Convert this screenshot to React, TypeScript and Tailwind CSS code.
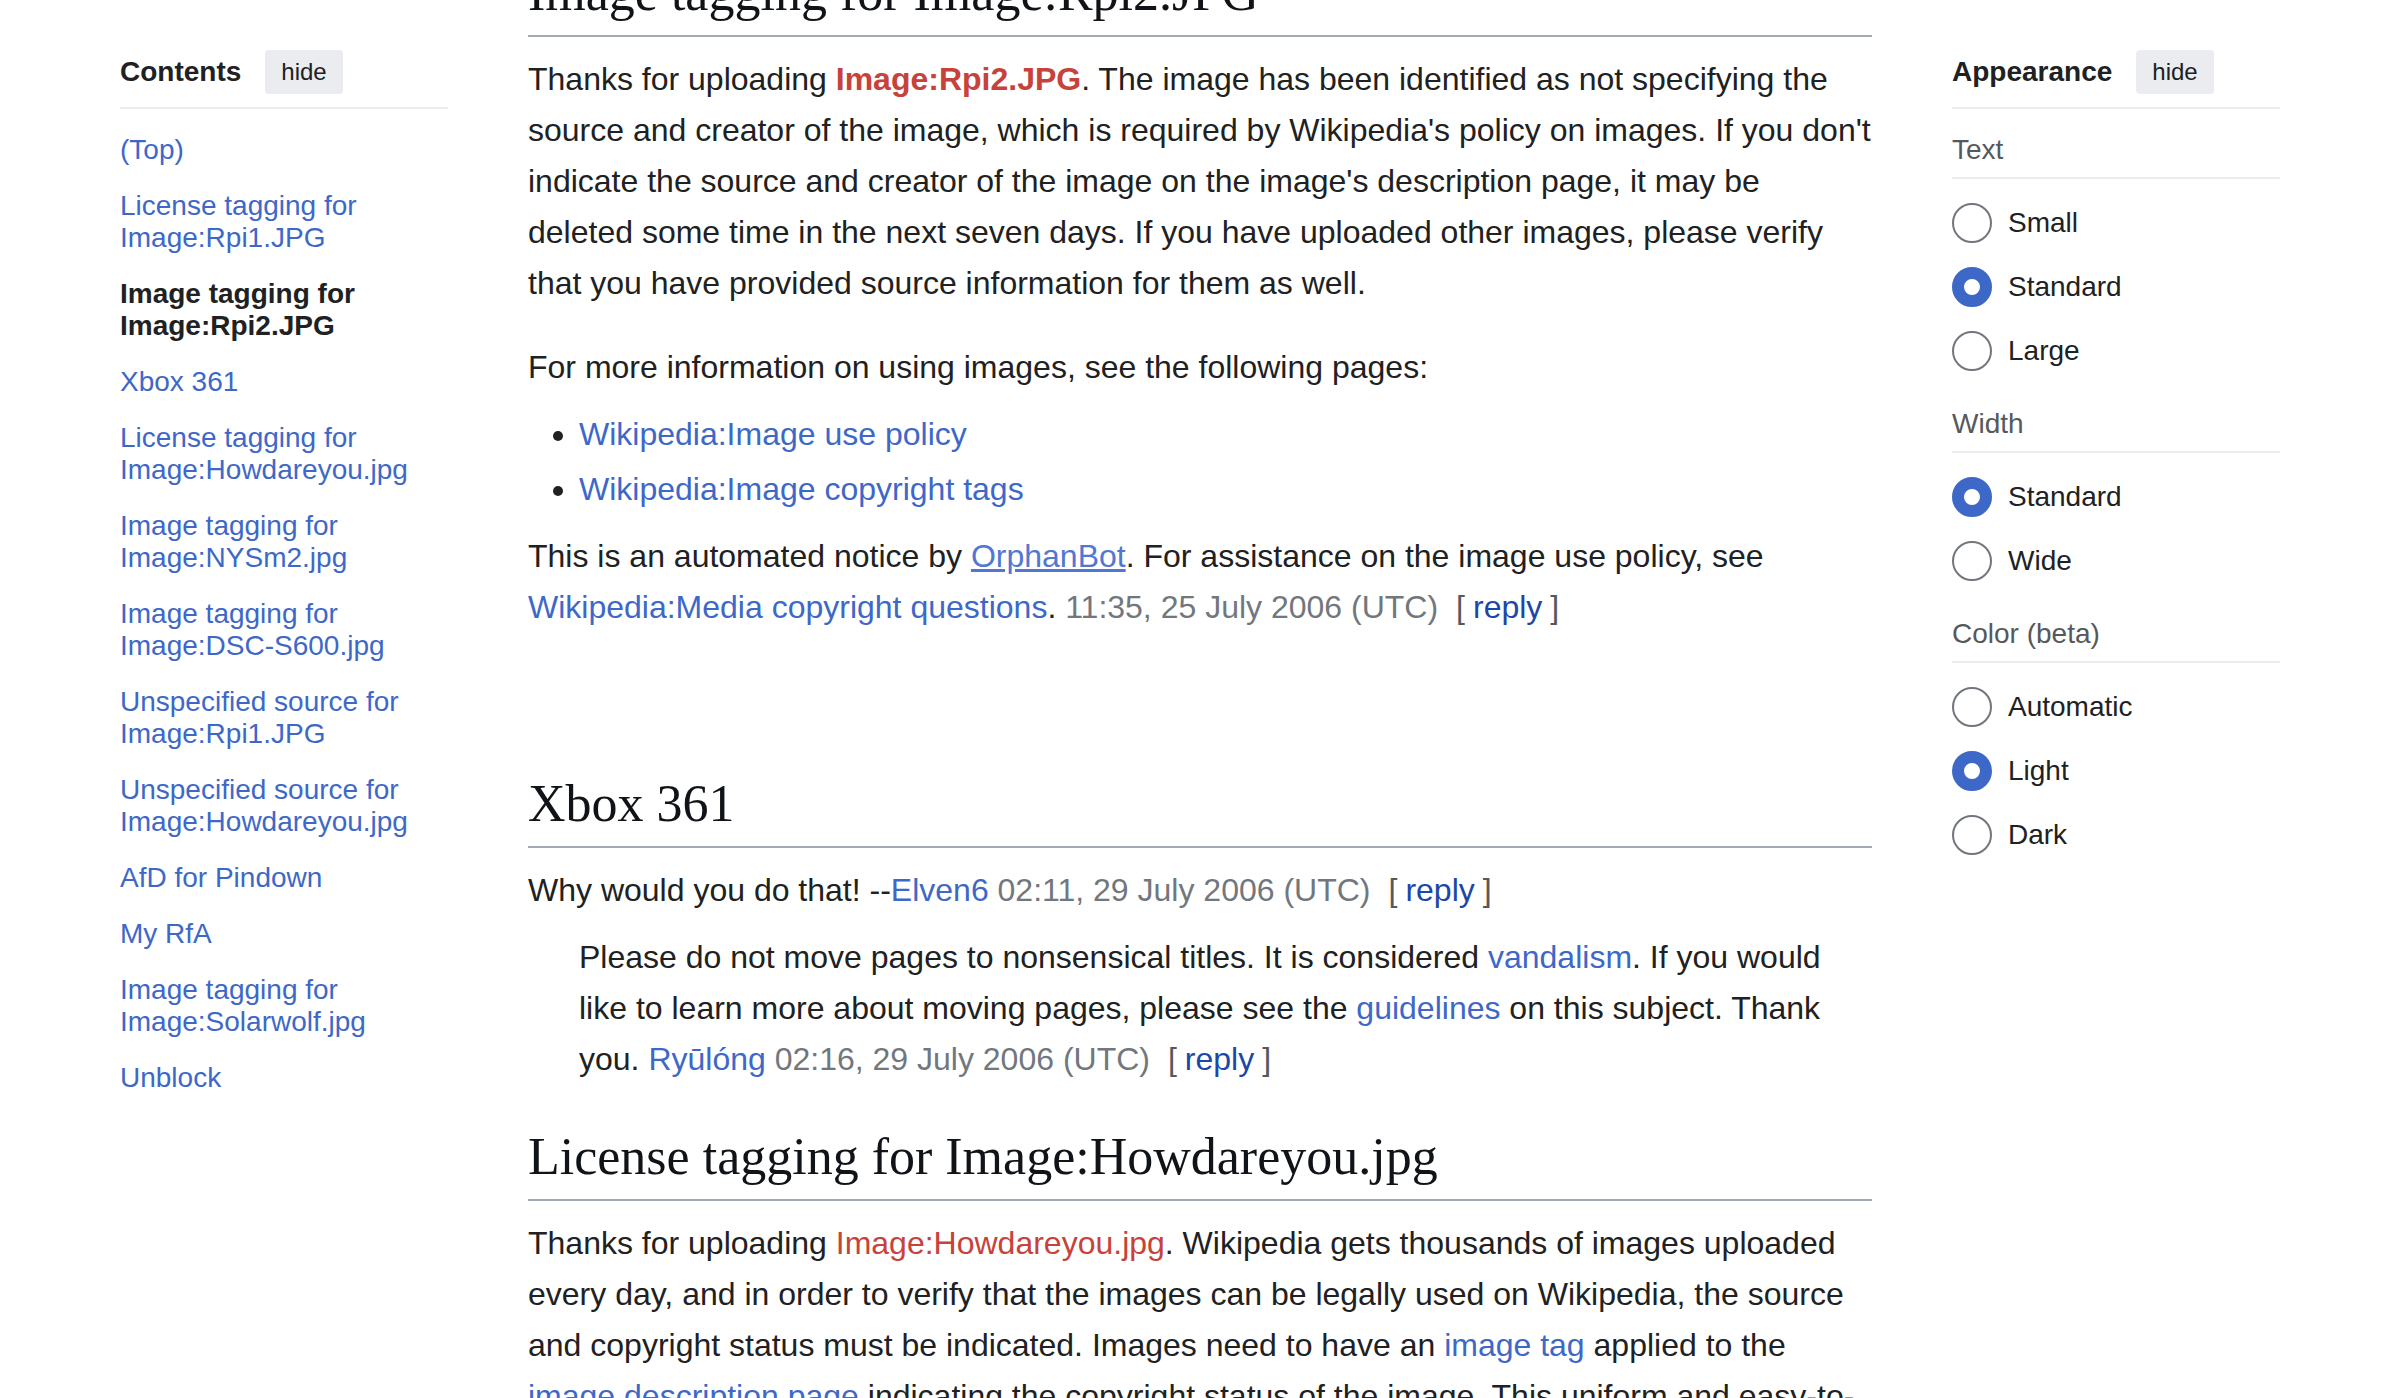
import { useState, type ReactNode } from "react";

const TOC: { label: string; active?: boolean }[] = [
  { label: "(Top)" },
  { label: "License tagging for Image:Rpi1.JPG" },
  { label: "Image tagging for Image:Rpi2.JPG", active: true },
  { label: "Xbox 361" },
  { label: "License tagging for Image:Howdareyou.jpg" },
  { label: "Image tagging for Image:NYSm2.jpg" },
  { label: "Image tagging for Image:DSC-S600.jpg" },
  { label: "Unspecified source for Image:Rpi1.JPG" },
  { label: "Unspecified source for Image:Howdareyou.jpg" },
  { label: "AfD for Pindown" },
  { label: "My RfA" },
  { label: "Image tagging for Image:Solarwolf.jpg" },
  { label: "Unblock" },
];

const SETTINGS = [
  { name: "Text", options: ["Small", "Standard", "Large"], initial: "Standard" },
  { name: "Width", options: ["Standard", "Wide"], initial: "Standard" },
  { name: "Color (beta)", options: ["Automatic", "Light", "Dark"], initial: "Light" },
];

function PanelHeader({ title }: { title: string }) {
  return (
    <div className="flex items-center gap-6 border-b-2 border-[#eaecf0] pb-[13px]">
      <h2 className="font-bold">{title}</h2>
      <button type="button" className="h-11 rounded-sm bg-[#eaecf0] px-4 text-2xl leading-8">
        hide
      </button>
    </div>
  );
}

function Link({ children }: { children: ReactNode }) {
  return (
    <a href="#" className="text-[#3e68c8] hover:underline">
      {children}
    </a>
  );
}

function RedLink({ children }: { children: ReactNode }) {
  return (
    <a href="#" className="text-[#c7423a] hover:underline">
      {children}
    </a>
  );
}

function Stamp({ children }: { children: ReactNode }) {
  return (
    <>
      <a href="#" className="text-[#72777d]">
        {children}
      </a>
      <span className="ml-[18px] whitespace-nowrap text-[#54595d]">
        [
        <button type="button" className="mx-2 text-[#1c47a8]">
          reply
        </button>
        ]
      </span>
    </>
  );
}

function Heading({ children }: { children: ReactNode }) {
  return (
    <h2 className="border-b-2 border-[#a2a9b1] pb-2 font-['Liberation_Serif',serif] text-[52px] leading-[68px] text-[#101418]">
      {children}
    </h2>
  );
}

function SettingGroup({ name, options, initial }: (typeof SETTINGS)[number]) {
  const [value, setValue] = useState(initial);
  return (
    <fieldset className="pt-[25px]">
      <legend className="sr-only">{name}</legend>
      <div aria-hidden="true" className="border-b-2 border-[#eaecf0] pb-[11px] text-[#54595d]">
        {name}
      </div>
      <div className="flex flex-col gap-6 pt-6 pb-3">
        {options.map((option) => (
          <label key={option} className="flex items-center gap-4">
            <input
              type="radio"
              name={name}
              value={option}
              checked={value === option}
              onChange={() => setValue(option)}
              className="size-10 shrink-0 appearance-none rounded-full border-2 border-[#72777d] bg-white checked:border-[12px] checked:border-[#3e68c8]"
            />
            {option}
          </label>
        ))}
      </div>
    </fieldset>
  );
}

export default function App() {
  return (
    <div className="flex h-screen gap-20 overflow-hidden bg-white px-[120px] font-['Liberation_Sans',Arial,sans-serif] text-[28px] leading-8 text-[#202122]">
      <nav aria-label="Contents" className="w-82 shrink-0 pt-[50px]">
        <PanelHeader title="Contents" />
        <ul className="flex flex-col gap-6 pt-[25px] pr-6">
          {TOC.map(({ label, active }) => (
            <li key={label}>
              <a href="#" className={active ? "font-bold" : "text-[#3e68c8] hover:underline"}>
                {label}
              </a>
            </li>
          ))}
        </ul>
      </nav>

      <main className="min-w-0 flex-1 text-[32px] leading-[51px]">
        <section className="-mt-[41px]">
          <Heading>Image tagging for Image:Rpi2.JPG</Heading>
          <p className="mt-[17px]">
            Thanks for uploading{" "}
            <b>
              <RedLink>Image:Rpi2.JPG</RedLink>
            </b>
            . The image has been identified as not specifying the source and creator of the image, which is
            required by Wikipedia's policy on images. If you don't indicate the source and creator of the image
            on the image's description page, it may be deleted some time in the next seven days. If you have
            uploaded other images, please verify that you have provided source information for them as well.
          </p>
          <p className="mt-[33px]">For more information on using images, see the following pages:</p>
          <ul className="mt-4 flex list-disc flex-col gap-1 pl-[51px]">
            <li>
              <Link>Wikipedia:Image use policy</Link>
            </li>
            <li>
              <Link>Wikipedia:Image copyright tags</Link>
            </li>
          </ul>
          <p className="mt-4">
            This is an automated notice by{" "}
            <a href="#" className="text-[#5277d3] underline">
              OrphanBot
            </a>
            . For assistance on the image use policy, see <Link>Wikipedia:Media copyright questions</Link>.{" "}
            <Stamp>11:35, 25 July 2006 (UTC)</Stamp>
          </p>
        </section>

        <section className="mt-[137px]">
          <Heading>Xbox 361</Heading>
          <p className="mt-[17px]">
            Why would you do that! --<Link>Elven6</Link> <Stamp>02:11, 29 July 2006 (UTC)</Stamp>
          </p>
          <p className="mt-4 ml-[51px]">
            Please do not move pages to nonsensical titles. It is considered <Link>vandalism</Link>. If you
            would like to learn more about moving pages, please see the <Link>guidelines</Link> on this
            subject. Thank you. <Link>Ryūlóng</Link> <Stamp>02:16, 29 July 2006 (UTC)</Stamp>
          </p>
        </section>

        <section className="mt-[38px]">
          <Heading>License tagging for Image:Howdareyou.jpg</Heading>
          <p className="mt-[17px]">
            Thanks for uploading <RedLink>Image:Howdareyou.jpg</RedLink>. Wikipedia gets thousands of images
            uploaded every day, and in order to verify that the images can be legally used on Wikipedia, the
            source and copyright status must be indicated. Images need to have an <Link>image tag</Link> applied
            to the <Link>image description page</Link> indicating the copyright status of the image. This
            uniform and easy-to-
          </p>
        </section>
      </main>

      <aside aria-label="Appearance" className="w-82 shrink-0 pt-[50px]">
        <PanelHeader title="Appearance" />
        {SETTINGS.map((setting) => (
          <SettingGroup key={setting.name} {...setting} />
        ))}
      </aside>
    </div>
  );
}
